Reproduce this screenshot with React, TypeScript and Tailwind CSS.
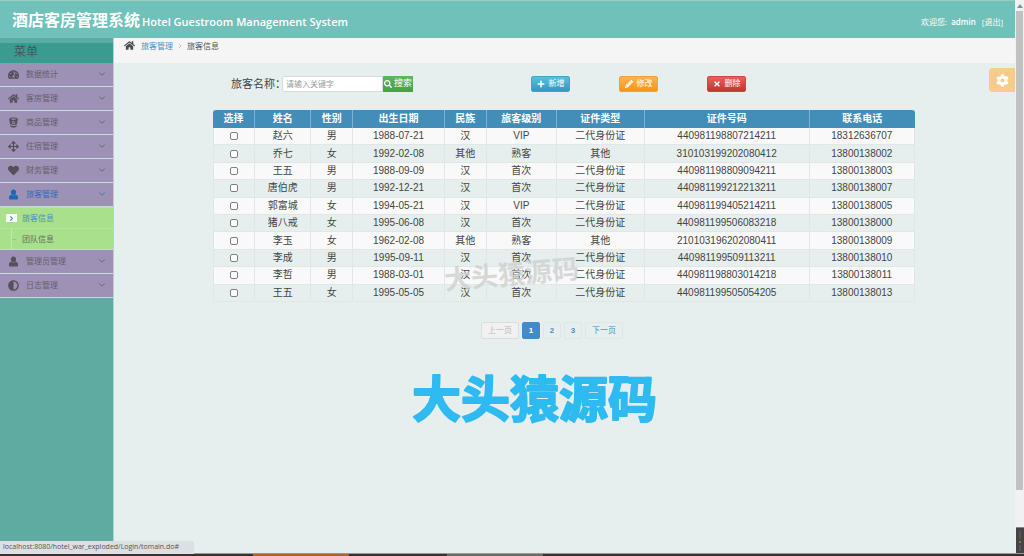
import React, { useState } from 'react';
import { clsx } from 'clsx';
import { ChevronDown, ChevronRight } from 'lucide-react';
import { FaAdjust, FaArrowsAlt, FaCog, FaHeart, FaHome, FaPencilAlt, FaPlus, FaSearch, FaTachometerAlt, FaTimes } from 'react-icons/fa';

function BucketIcon({ className }: { className?: string }) {
  return (
    <svg viewBox="0 0 24 24" fill="currentColor" className={className} aria-hidden="true">
      <path
        fillRule="evenodd"
        d="M12 1C7 1 2.500 2.400 2.500 4.500L4.300 15.500C6 18.200 18 18.200 19.700 15.500L21.500 4.500C21.500 2.400 17 1 12 1ZM12 3C15.500 3 18 3.700 18 4.500S15.500 6 12 6 6 5.300 6 4.500 8.500 3 12 3ZM12 8.500A3.500 3.500 0 1 1 12 15.500A3.500 3.500 0 1 1 12 8.500Z"
      />
      <circle cx="12" cy="12" r="1.700" />
      <path d="M4.800 17.800C8 20 16 20 19.200 17.800L18.500 21.500C16 23.500 8 23.500 5.500 21.500Z" />
    </svg>
  );
}

function UserIcon({ className }: { className?: string }) {
  return (
    <svg viewBox="0 0 24 24" fill="currentColor" className={className} aria-hidden="true">
      <ellipse cx="12" cy="7.500" rx="5.500" ry="6.500" />
      <path d="M7 12.500C3.500 13 2 16 2 20C2 22 3.500 23 5 23H19C20.500 23 22 22 22 20C22 16 20.500 13 17 12.500C14 15.500 10 15.500 7 12.500Z" />
    </svg>
  );
}

const menu = [
  { label: '数据统计', icon: FaTachometerAlt },
  { label: '客房管理', icon: FaHome },
  { label: '商品管理', icon: BucketIcon },
  { label: '住宿管理', icon: FaArrowsAlt },
  { label: '财务管理', icon: FaHeart },
  { label: '旅客管理', icon: UserIcon, children: ['旅客信息', '团队信息'] },
  { label: '管理员管理', icon: UserIcon },
  { label: '日志管理', icon: FaAdjust },
];

const columns = [
  { title: '选择', width: 'w-[6%]' },
  { title: '姓名', width: 'w-[8%]' },
  { title: '性别', width: 'w-[6%]' },
  { title: '出生日期', width: 'w-[13%]' },
  { title: '民族', width: 'w-[6%]' },
  { title: '旅客级别', width: 'w-[10%]' },
  { title: '证件类型', width: 'w-[12.5%]' },
  { title: '证件号码', width: 'w-[23.5%]' },
  { title: '联系电话', width: 'w-[15%]' },
];

const guests = [
  ['赵六', '男', '1988-07-21', '汉', 'VIP', '二代身份证', '440981198807214211', '18312636707'],
  ['乔七', '女', '1992-02-08', '其他', '熟客', '其他', '310103199202080412', '13800138002'],
  ['王五', '男', '1988-09-09', '汉', '首次', '二代身份证', '440981198809094211', '13800138003'],
  ['唐伯虎', '男', '1992-12-21', '汉', '首次', '二代身份证', '440981199212213211', '13800138007'],
  ['郭富城', '女', '1994-05-21', '汉', 'VIP', '二代身份证', '440981199405214211', '13800138005'],
  ['猪八戒', '女', '1995-06-08', '汉', '首次', '二代身份证', '440981199506083218', '13800138000'],
  ['李玉', '女', '1962-02-08', '其他', '熟客', '其他', '210103196202080411', '13800138009'],
  ['李成', '男', '1995-09-11', '汉', '首次', '二代身份证', '440981199509113211', '13800138010'],
  ['李哲', '男', '1988-03-01', '汉', '首次', '二代身份证', '440981198803014218', '13800138011'],
  ['王五', '女', '1995-05-05', '汉', '首次', '二代身份证', '440981199505054205', '13800138013'],
];

function Sidebar() {
  const [active, setActive] = useState('旅客管理');

  return (
    <aside className="flex w-[114px] shrink-0 flex-col border-r border-[#a9d8d0] bg-[#5faba1]">
      <h2 className="h-[25px] border-t-[5px] border-[#5daca3] bg-[#3a9b90] pl-3.5 text-[12px] leading-[18px] text-[#3c5b57]">菜单</h2>
      <ul>
        {menu.map(({ label, icon: Icon, children }) => {
          const open = active === label;
          return (
            <li key={label}>
              <button
                onClick={() => setActive(label)}
                className={clsx(
                  'flex h-6 w-full items-center border-b border-[#c4dcdc] bg-[#9d91b5] pr-1.5 pb-px pl-2 text-left text-[8px]',
                  open ? 'text-[#2c6fbb]' : 'text-[#655e6e]'
                )}
              >
                <Icon className={clsx('size-[11px]', open ? 'text-[#1c68b4]' : 'text-[#55505a]')} />
                <span className="ml-[7px] flex-1">{label}</span>
                <ChevronDown className="size-2.5" />
              </button>
              {open && children && (
                <ul className="border-b border-[#c4dcdc] bg-[#a9e08c] text-[8px]">
                  {children.map((child, i) => (
                    <li key={child} className="flex h-[21px] items-center border-t border-[#b5e49f] pl-1.5">
                      {i === 0 ? (
                        <span className="flex h-2 w-[11px] items-center justify-center bg-white text-[#4c8fbd]">
                          <ChevronRight className="size-[7px]" strokeWidth={4} />
                        </span>
                      ) : (
                        <span className="ml-[5px] flex h-full w-1.5 items-center border-l border-[#c2e8b0]">
                          <span className="h-px w-1 bg-[#9cbf8e]" />
                        </span>
                      )}
                      <a href="#" className={clsx('ml-[5px]', i === 0 ? 'text-[#4c8fbd]' : 'text-[#61705c]')}>{child}</a>
                    </li>
                  ))}
                </ul>
              )}
            </li>
          );
        })}
      </ul>
    </aside>
  );
}

function Toolbar() {
  const button = 'flex h-4 w-[39px] items-center justify-center gap-1 rounded-xs border text-[8px] text-white';

  return (
    <div className="flex items-center pl-[18px]">
      <label htmlFor="guest" className="text-[11px] leading-4 text-[#444]">旅客名称：</label>
      <input
        id="guest"
        placeholder="请输入关键字"
        className="-ml-1 h-4 w-[101px] rounded-l-xs border border-[#d5dadb] bg-white px-[3px] text-[8px] placeholder:text-[#999]"
      />
      <button className="flex h-4 w-[30px] items-center justify-center gap-[2px] bg-linear-to-b from-[#5cb85c] to-[#479e47] text-[9px] text-white">
        <FaSearch className="size-2" />
        搜索
      </button>
      <div className="ml-[118px] flex gap-[49px]">
        <button className={clsx(button, 'border-[#42a5c4] bg-linear-to-b from-[#5bc0de] to-[#3199bd]')}>
          <FaPlus className="size-2" />
          新增
        </button>
        <button className={clsx(button, 'border-[#efa23a] bg-linear-to-b from-[#fbb450] to-[#f89406]')}>
          <FaPencilAlt className="size-2" />
          修改
        </button>
        <button className={clsx(button, 'border-[#cf4540] bg-linear-to-b from-[#ee5f5b] to-[#bd362f]')}>
          <FaTimes className="size-2" />
          删除
        </button>
      </div>
    </div>
  );
}

function GuestTable() {
  return (
    <table className="mt-[18px] h-[192px] w-full table-fixed border-separate border-spacing-0 overflow-hidden rounded-t-[3px] text-center text-[10px] leading-4 text-[#444]">
      <thead>
        <tr>
          {columns.map(({ title, width }) => (
            <th key={title} className={clsx('h-[18px] border-r border-[#7fb2d3] bg-[#438eb9] font-bold text-white last:border-r-0', width)}>
              {title}
            </th>
          ))}
        </tr>
      </thead>
      <tbody>
        {guests.map((guest) => (
          <tr key={guest[6]} className="odd:bg-[#f9f9f9]">
            <td className="border-r border-b border-l border-[#e1e6e6]">
              <input type="checkbox" aria-label={guest[0]} className="mx-auto block size-2 appearance-none rounded-xs border border-[#808080] bg-white" />
            </td>
            {guest.map((value, i) => (
              <td key={i} className="border-r border-b border-[#e1e6e6]">{value}</td>
            ))}
          </tr>
        ))}
      </tbody>
    </table>
  );
}

function Pagination() {
  const item = 'h-[17px] rounded-xs border';

  return (
    <nav className="mt-5 flex justify-center gap-[3px] pr-6 text-[8px] text-[#4a90c2]">
      <button disabled className={clsx(item, 'w-[38px] border-[#ddd] bg-[#f1f1f1] text-[#bbb]')}>上一页</button>
      <button className={clsx(item, 'w-[18px] border-[#428bca] bg-[#428bca] font-semibold text-white')}>1</button>
      <button className={clsx(item, 'w-[18px] border-[#dfe8e8] font-semibold')}>2</button>
      <button className={clsx(item, 'w-[18px] border-[#dfe8e8] font-semibold')}>3</button>
      <button className={clsx(item, 'w-[38px] border-[#dfe8e8]')}>下一页</button>
    </nav>
  );
}

export default function App() {
  return (
    <div className="relative flex min-h-screen flex-col bg-[#e6efee] font-['Open_Sans','Noto_Sans_CJK_SC',sans-serif]">
      <div className="flex flex-1">
        <div className="flex min-w-0 flex-1 flex-col">
          <header className="flex h-[38px] items-center justify-between border-t border-[#9fcbc6] bg-[#6fc1ba] px-3 text-white">
            <h1 className="flex items-baseline gap-0.5 text-[16px] font-bold">
              酒店客房管理系统
              <span className="text-[11px] font-semibold">Hotel Guestroom Management System</span>
            </h1>
            <div className="flex items-center pt-1 text-[8px]">
              <span>欢迎您:</span>
              <span className="ml-1 font-semibold">admin</span>
              <a href="#" className="ml-1.5">[退出]</a>
            </div>
          </header>

          <div className="flex flex-1">
            <Sidebar />
            <main className="min-w-0 flex-1">
              <div className="flex h-[25px] items-start gap-[3px] bg-[#f5f5f5] pt-0.5 pl-2.5 text-[8px] leading-3 text-[#555]">
                <FaHome className="size-[11px] text-[#4c4c4c]" />
                <a href="#" className="ml-[3px] text-[#4c8fbd]">旅客管理</a>
                <ChevronRight className="mt-0.5 size-2 text-[#aaa]" />
                <span>旅客信息</span>
              </div>
              <div className="pt-[13px] pr-[100px] pl-[99px] font-['Liberation_Sans','Noto_Sans_CJK_SC',sans-serif]">
                <Toolbar />
                <GuestTable />
                <Pagination />
              </div>
            </main>
          </div>
        </div>

        {/* window scroll bar */}
        <div className="flex w-[9px] shrink-0 flex-col items-center bg-[#f1f1f1]">
          <div className="flex h-[11px] items-center">
            <svg viewBox="0 0 6 4" className="h-1 w-1.5 fill-[#8b8b8b]"><path d="M0 4 3 0 6 4Z" /></svg>
          </div>
          <div className="mb-[63px] w-[7px] flex-1 bg-[#c1c1c1]" />
        </div>
      </div>

      <footer className="flex h-[3px] border-t border-[#999] bg-[#3a302c]">
        <div className="ml-[253px] w-24 bg-[#a8642e]" />
        <div className="ml-[98px] w-24 bg-[#6b6b69]" />
      </footer>

      <button aria-label="设置" className="absolute top-[68px] right-[9px] flex h-6 w-[26px] items-center justify-center rounded-l-sm bg-[#f7cb8b] text-white">
        <FaCog className="size-[13px]" />
      </button>
      <div className="absolute right-0 bottom-[3px] flex h-[26px] w-2 flex-col items-center justify-center gap-0.5 border-t border-[#888] bg-[#444]">
        <span className="h-2 w-0.5 bg-[#555]" />
        <span className="size-0.5 bg-[#8a7440]" />
        <span className="h-1.5 w-0.5 bg-[#555]" />
      </div>
      <div className="absolute bottom-[2px] left-0 flex h-[13px] w-[194px] items-center rounded-tr-xs bg-[#dcdfe4] pl-[3px] text-[7px] whitespace-nowrap text-[#555]">
        localhost:8080/hotel_war_exploded/Login/tomain.do#
      </div>

      {/* watermarks */}
      <svg className="pointer-events-none absolute top-[250px] left-[440px] h-12 w-36 -rotate-5 fill-[#cfd1d1] text-[27px] font-bold opacity-80" strokeLinejoin="round">
        <text x="4" y="34">大头猿源码</text>
      </svg>
      <svg className="pointer-events-none absolute top-[356px] left-[408px] h-24 w-64 fill-[#2fbaf1] stroke-[#2fbaf1] stroke-2 text-[49px] font-bold" strokeLinejoin="round">
        <text x="4" y="61">大头猿源码</text>
      </svg>
    </div>
  );
}
